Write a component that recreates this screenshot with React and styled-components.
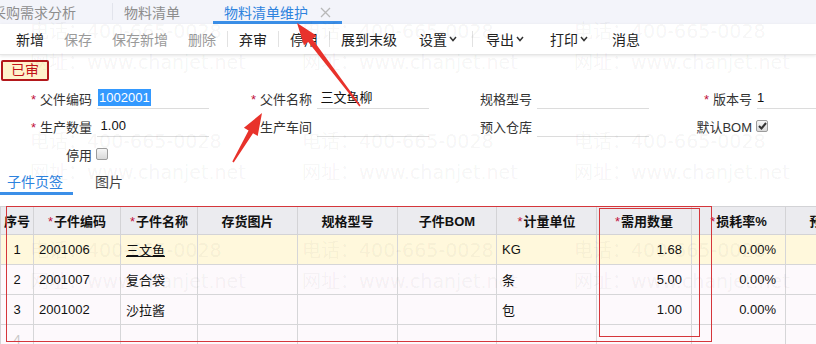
import React from 'react'
import styled, { createGlobalStyle } from 'styled-components'

const GlobalStyle = createGlobalStyle`
  html, body {
    margin: 0;
    padding: 0;
    background: #fff;
    overflow: hidden;
  }
  body {
    font-family: "Liberation Sans", "Noto Sans CJK SC", sans-serif;
    font-size: 13px;
    color: #222;
  }
`

const Page = styled.div`
  position: relative;
  width: 816px;
  height: 344px;
  overflow: hidden;
  background: #fff;
`

/* ---------- top tabs ---------- */
const TabBar = styled.div`
  display: flex;
  height: 24px;
  margin-left: -15px;
  background: #f3f4fa;
`

const Tab = styled.div`
  position: relative;
  display: flex;
  align-items: center;
  gap: 12px;
  padding: ${(p) => (p.$active ? '0 11px' : '0 33px 0 11px')};
  font-size: 14px;
  color: ${(p) => (p.$active ? '#2d83de' : '#8d8d8d')};
  box-shadow: ${(p) => (p.$active ? 'inset 0 -3px 0 #3b8fe8' : 'none')};
  white-space: nowrap;

  &:first-child {
    padding: 0 37px 0 7px;
  }

  &::after {
    content: '';
    display: ${(p) => (p.$sep ? 'block' : 'none')};
    position: absolute;
    right: 0;
    top: 3px;
    width: 1px;
    height: 17px;
    background: #e2e4ec;
  }
`

/* ---------- toolbar ---------- */
const Toolbar = styled.div`
  position: relative;
  z-index: 1;
  display: flex;
  align-items: center;
  height: 30px;
  padding-left: 6px;
  background: #fff;
  border-bottom: 1px solid #e6e6e6;
  box-shadow: 0 1px 3px rgba(0, 0, 0, 0.1);
`

const ToolButton = styled.div`
  display: flex;
  align-items: center;
  gap: 2px;
  height: 100%;
  padding: ${(p) => (p.$menu ? '0 14px 0 12px' : '0 10px')};
  font-size: 14px;
  color: ${(p) => (p.$disabled ? '#9a9a9a' : '#222')};
  white-space: nowrap;
`

const ToolSep = styled.span`
  width: 1px;
  height: 16px;
  margin: 0 1px;
  background: #e2e2e2;
`

const Chevron = () => (
  <svg width="8" height="6" viewBox="0 0 8 6">
    <polyline points="1,1 4,4.5 7,1" fill="none" stroke="#333" strokeWidth="1.5" />
  </svg>
)

const CloseX = () => (
  <svg width="11" height="11" viewBox="0 0 11 11">
    <path d="M1 1 L10 10 M10 1 L1 10" stroke="#b8b8b8" strokeWidth="1.3" />
  </svg>
)

/* ---------- header form ---------- */
const Badge = styled.div`
  width: 44px;
  height: 17px;
  margin: 5px 0 0 1px;
  border: 2px solid #b3181b;
  border-radius: 2px;
  background: #fff4cc;
  color: #c0151a;
  font-size: 14px;
  line-height: 17px;
  text-align: center;
`

const Form = styled.div`
  display: grid;
  grid-template-columns: repeat(4, 220px);
  row-gap: 6px;
  margin-top: 6px;
`

const Field = styled.div`
  display: flex;
  align-items: center;
  height: 22px;
  white-space: nowrap;
`

const Label = styled.div`
  flex: none;
  width: 92px;
  text-align: right;
  font-size: 13px;
  color: #333;
`

const Star = styled.span`
  color: #c1143c;
  margin-right: 4px;
`

const Input = styled.div`
  flex: none;
  box-sizing: border-box;
  width: 112px;
  height: 22px;
  margin-left: 5px;
  border-bottom: 1px solid #dcdcdc;
  font-size: 13px;
  line-height: 21px;
  color: #111;
`

const Selected = styled.span`
  display: inline-block;
  padding: 0 1px;
  margin-left: 1px;
  line-height: 17px;
  background: #3399ff;
  color: #fff;
`

const Check = styled.span`
  display: inline-flex;
  align-items: center;
  justify-content: center;
  box-sizing: border-box;
  width: 12px;
  height: 12px;
  margin-left: 4px;
  border: 1px solid #9c9c9c;
  border-radius: 2px;
  background: linear-gradient(#f6f6f6, #d9d9d9);
`

/* ---------- sub tabs ---------- */
const SubTabBar = styled.div`
  display: flex;
  gap: 12px;
  height: 26px;
  margin-top: 4px;
`

const SubTab = styled.div`
  display: flex;
  align-items: center;
  padding: 0 10px 3px;
  font-size: 14px;
  color: ${(p) => (p.$active ? '#2d83de' : '#444')};
  box-shadow: ${(p) => (p.$active ? 'inset 0 -3px 0 #3b8fe8' : 'none')};

  &:first-child {
    padding-left: 7px;
  }
`

/* ---------- grid ---------- */
const Table = styled.table`
  margin-top: 11px;
  border-collapse: collapse;
  table-layout: fixed;
  width: 885px;
  font-size: 13px;
`

const Th = styled.th`
  height: 27px;
  padding: 0;
  border: 1px solid #d3d3d6;
  background: #ebebef;
  font-weight: bold;
  color: #111;
  text-align: center;
  white-space: nowrap;
`

const Row = styled.tr`
  background: ${(p) => (p.$current ? '#fff8dc' : '#fdf9fc')};
`

const Td = styled.td`
  height: 29px;
  padding: ${(p) => (p.$align === 'right' ? '0 9px 0 0' : '0 5px')};
  border: 1px solid #d6d6d8;
  text-align: ${(p) => p.$align || 'left'};
  color: ${(p) => (p.$faint ? '#c8c8c8' : '#111')};
  white-space: nowrap;
  overflow: hidden;
`

const Link = styled.span`
  text-decoration: underline;
`

/* ---------- overlays ---------- */
const Watermark = styled.div`
  position: absolute;
  inset: 0;
  z-index: 2;
  display: grid;
  grid-template-columns: repeat(3, 272px);
  grid-auto-rows: 109.5px;
  padding: 16px 0 0 30px;
  pointer-events: none;
  font-family: "DejaVu Sans", "Noto Sans CJK SC", sans-serif;
  font-size: 19px;
  line-height: 31px;
  color: rgba(0, 0, 0, 0.05);
  white-space: nowrap;
`

const Mark = styled.div`
  display: flex;
  flex-direction: column;
`

const RedBox = styled.div`
  position: absolute;
  z-index: 3;
  left: ${(p) => p.$x}px;
  top: ${(p) => p.$y}px;
  width: ${(p) => p.$w}px;
  height: ${(p) => p.$h}px;
  box-sizing: border-box;
  border: 1px solid #d5363b;
  pointer-events: none;
`

const Annotations = styled.svg`
  position: absolute;
  z-index: 3;
  left: 0;
  top: 0;
  pointer-events: none;
`

function arrowPoints([tx, ty], [px, py]) {
  const dx = px - tx
  const dy = py - ty
  const len = Math.hypot(dx, dy)
  const ux = dx / len
  const uy = dy / len
  const nx = -uy
  const ny = ux
  const bx = px - ux * 22
  const by = py - uy * 22
  const pt = (x, y, k) => `${x + nx * k},${y + ny * k}`
  return [
    pt(tx, ty, 0.8),
    pt(bx, by, 2.6),
    pt(bx, by, 8),
    `${px},${py}`,
    pt(bx, by, -8),
    pt(bx, by, -2.6),
    pt(tx, ty, -0.8),
  ].join(' ')
}

const columns = [
  { w: 33, title: '序号' },
  { w: 87, title: '子件编码', req: true },
  { w: 77, title: '子件名称', req: true },
  { w: 100, title: '存货图片' },
  { w: 100, title: '规格型号' },
  { w: 99, title: '子件BOM' },
  { w: 100, title: '计量单位', req: true },
  { w: 95, title: '需用数量', req: true },
  { w: 94, title: '损耗率%', req: true },
  { w: 100, title: '预入仓库' },
]

const rows = [
  { no: '1', code: '2001006', name: '三文鱼', unit: 'KG', qty: '1.68', loss: '0.00%', current: true },
  { no: '2', code: '2001007', name: '复合袋', unit: '条', qty: '5.00', loss: '0.00%' },
  { no: '3', code: '2001002', name: '沙拉酱', unit: '包', qty: '1.00', loss: '0.00%' },
  { no: '4', faint: true },
]

export default function App() {
  return (
    <Page>
      <GlobalStyle />
      <TabBar>
        <Tab $sep>采购需求分析</Tab>
        <Tab>物料清单</Tab>
        <Tab $active>
          物料清单维护
          <CloseX />
        </Tab>
      </TabBar>

      <Toolbar>
        <ToolButton>新增</ToolButton>
        <ToolButton $disabled>保存</ToolButton>
        <ToolButton $disabled>保存新增</ToolButton>
        <ToolButton $disabled>删除</ToolButton>
        <ToolSep />
        <ToolButton>弃审</ToolButton>
        <ToolSep />
        <ToolButton>停用</ToolButton>
        <ToolSep />
        <ToolButton>展到末级</ToolButton>
        <ToolButton $menu>
          设置
          <Chevron />
        </ToolButton>
        <ToolSep />
        <ToolButton $menu>
          导出
          <Chevron />
        </ToolButton>
        <ToolButton $menu>
          打印
          <Chevron />
        </ToolButton>
        <ToolButton>消息</ToolButton>
      </Toolbar>

      <Badge>已审</Badge>

      <Form>
        <Field>
          <Label><Star>*</Star>父件编码</Label>
          <Input><Selected>1002001</Selected></Input>
        </Field>
        <Field>
          <Label><Star>*</Star>父件名称</Label>
          <Input>&nbsp;三文鱼柳</Input>
        </Field>
        <Field>
          <Label>规格型号</Label>
          <Input />
        </Field>
        <Field>
          <Label><Star>*</Star>版本号</Label>
          <Input>1</Input>
        </Field>

        <Field>
          <Label><Star>*</Star>生产数量</Label>
          <Input>&nbsp;1.00</Input>
        </Field>
        <Field>
          <Label>生产车间</Label>
          <Input />
        </Field>
        <Field>
          <Label>预入仓库</Label>
          <Input />
        </Field>
        <Field>
          <Label>默认BOM</Label>
          <Check>
            <svg width="9" height="8" viewBox="0 0 9 8">
              <polyline points="1,4 3.5,6.5 8,1" fill="none" stroke="#333" strokeWidth="2" />
            </svg>
          </Check>
        </Field>

        <Field>
          <Label>停用</Label>
          <Check />
        </Field>
      </Form>

      <SubTabBar>
        <SubTab $active>子件页签</SubTab>
        <SubTab>图片</SubTab>
      </SubTabBar>

      <Table>
        <colgroup>
          {columns.map((c) => (
            <col key={c.title} style={{ width: c.w }} />
          ))}
        </colgroup>
        <thead>
          <tr>
            {columns.map((c) => (
              <Th key={c.title}>
                {c.req && <Star style={{ marginRight: 1, fontWeight: 'normal' }}>*</Star>}
                {c.title}
              </Th>
            ))}
          </tr>
        </thead>
        <tbody>
          {rows.map((r) => (
            <Row key={r.no} $current={r.current}>
              <Td $align="center" $faint={r.faint}>{r.no}</Td>
              <Td>{r.code}</Td>
              <Td>{r.current ? <Link>{r.name}</Link> : r.name}</Td>
              <Td />
              <Td />
              <Td />
              <Td>{r.unit}</Td>
              <Td $align="right">{r.qty}</Td>
              <Td $align="right">{r.loss}</Td>
              <Td />
            </Row>
          ))}
        </tbody>
      </Table>

      <Watermark>
        {Array.from({ length: 9 }).map((_, i) => (
          <Mark key={i}>
            <span>电话：400-665-0028</span>
            <span>网址：www.chanjet.net</span>
          </Mark>
        ))}
      </Watermark>

      <RedBox $x={6} $y={206} $w={706} $h={136} />
      <RedBox $x={599} $y={208} $w={101} $h={129} />

      <Annotations width="816" height="344">
        <polygon points={arrowPoints([360, 106], [297, 23])} fill="#e8322b" />
        <polygon points={arrowPoints([233, 162], [262, 113])} fill="#e8322b" />
      </Annotations>
    </Page>
  )
}
